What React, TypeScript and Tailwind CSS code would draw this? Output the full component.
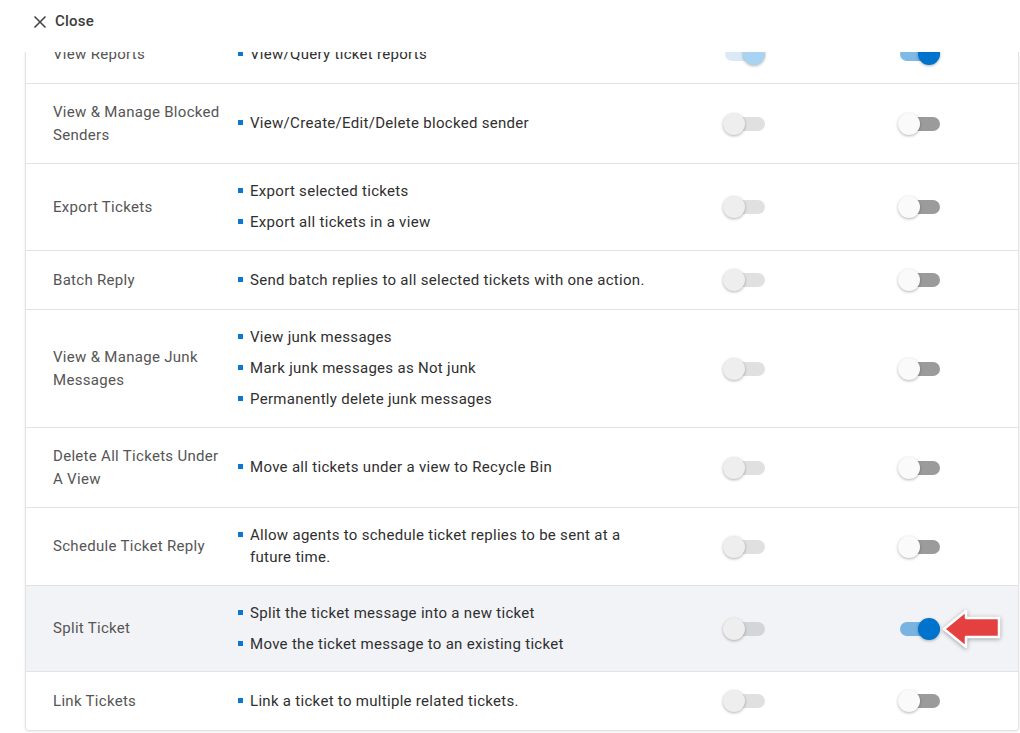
import React from "react";

type Row = {
  name: string;
  items: string[];
  a: "on-light" | "off";
  b: "on" | "off";
  highlight?: boolean;
  arrow?: boolean;
};

const rows: Row[] = [
  { name: "View Reports", items: ["View/Query ticket reports"], a: "on-light", b: "on" },
  { name: "View & Manage Blocked Senders", items: ["View/Create/Edit/Delete blocked sender"], a: "off", b: "off" },
  { name: "Export Tickets", items: ["Export selected tickets", "Export all tickets in a view"], a: "off", b: "off" },
  { name: "Batch Reply", items: ["Send batch replies to all selected tickets with one action."], a: "off", b: "off" },
  {
    name: "View & Manage Junk Messages",
    items: ["View junk messages", "Mark junk messages as Not junk", "Permanently delete junk messages"],
    a: "off",
    b: "off",
  },
  { name: "Delete All Tickets Under A View", items: ["Move all tickets under a view to Recycle Bin"], a: "off", b: "off" },
  {
    name: "Schedule Ticket Reply",
    items: ["Allow agents to schedule ticket replies to be sent at a future time."],
    a: "off",
    b: "off",
  },
  {
    name: "Split Ticket",
    items: ["Split the ticket message into a new ticket", "Move the ticket message to an existing ticket"],
    a: "off",
    b: "on",
    highlight: true,
    arrow: true,
  },
  { name: "Link Tickets", items: ["Link a ticket to multiple related tickets."], a: "off", b: "off" },
];

function Toggle({ kind }: { kind: "on" | "on-light" | "off-light" | "off" }) {
  const track =
    kind === "on"
      ? "bg-[#0074cc]/50"
      : kind === "on-light"
        ? "bg-[#dbe9f6]"
        : kind === "off-light"
          ? "bg-black/[0.12]"
          : "bg-[#9b9b9b]";
  const thumb =
    kind === "on"
      ? "left-[20px] bg-[#0073cd]"
      : kind === "on-light"
        ? "left-[20px] bg-[#a9d3f3]"
        : kind === "off-light"
          ? "left-0 bg-[#eeeeee]"
          : "left-0 bg-[#fafafa]";
  return (
    <div className="relative h-[22px] w-[42px]">
      <div className={`absolute left-[2px] right-0 top-[4px] h-[14px] rounded-full ${track}`} />
      <div
        className={`absolute top-0 h-[22px] w-[22px] rounded-full shadow-[0_1px_3px_rgba(0,0,0,0.3)] ${thumb}`}
      />
    </div>
  );
}

function Arrow() {
  return (
    <svg
      width="64"
      height="44"
      viewBox="0 0 64 44"
      className="absolute right-[14px] top-[21px] drop-shadow-[0_1px_2px_rgba(0,0,0,0.35)]"
    >
      <polygon
        points="4,22 26,4 26,11 59,11 59,30 26,30 26,40"
        fill="#e4403f"
        stroke="#ffffff"
        strokeWidth="2.5"
        strokeLinejoin="round"
      />
    </svg>
  );
}

export default function App() {
  return (
    <div className="flex h-[733px] flex-col overflow-hidden bg-white font-['Roboto',sans-serif] text-[15px]">
      <div className="relative z-10 flex h-[52px] shrink-0 items-start bg-white pl-[33px] pt-[12px]">
        <button type="button" className="flex items-center gap-[8px] text-[#3c3c3c]">
          <svg width="14" height="14" viewBox="0 0 14 14" className="mt-[1px]">
            <path d="M1.5 1.5 L12.5 12.5 M12.5 1.5 L1.5 12.5" stroke="#444" strokeWidth="1.6" />
          </svg>
          <span className="font-medium leading-[18px] tracking-[0.2px]">Close</span>
        </button>
      </div>
      <div className="min-h-0 flex-1 pl-[25px] pr-px">
        <div className="mt-[-28px] overflow-hidden rounded-[4px] border border-[#e2e2e2] bg-white shadow-[0_1px_3px_rgba(0,0,0,0.08)]">
          {rows.map((r, i) => {
            const last = i === rows.length - 1;
            return (
              <div
                key={r.name}
                className={`relative grid grid-cols-[212px_412px_188px_162px_1fr] ${
                  last ? "min-h-[58px]" : "min-h-[59px] border-b border-[#e3e3e3]"
                } ${r.highlight ? "bg-[#f2f3f7]" : ""}`}
              >
                <div className="flex items-center py-[16.5px] pl-[27px] pr-[8px] leading-[23px] tracking-[0.3px] text-[#555555]">
                  {r.name}
                </div>
                <ul
                  className={`flex flex-col justify-center tracking-[0.3px] text-[#2f2f2f] ${
                    r.highlight ? "pb-[11px] pt-[12px]" : "py-[12px]"
                  }`}
                >
                  {r.items.map((t) => (
                    <li key={t} className="flex pb-[5px] pt-[4px] leading-[22px]">
                      <span className="mr-[7px] mt-[8px] h-[5px] w-[5px] shrink-0 bg-[#0a78d2]" />
                      <span>{t}</span>
                    </li>
                  ))}
                </ul>
                <div className="flex items-center justify-center">
                  <Toggle kind={r.a === "on-light" ? "on-light" : "off-light"} />
                </div>
                <div className="flex items-center justify-center">
                  <Toggle kind={r.b} />
                </div>
                <div />
                {r.arrow && <Arrow />}
              </div>
            );
          })}
        </div>
      </div>
    </div>
  );
}
